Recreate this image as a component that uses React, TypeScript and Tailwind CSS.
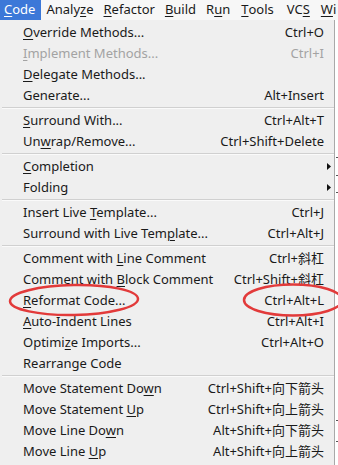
import React from "react";

type Item =
  | { sep: true }
  | {
      sep?: false;
      label: React.ReactNode;
      shortcut?: string;
      disabled?: boolean;
      submenu?: boolean;
    };

// underline a mnemonic letter
const U = ({ children }: { children: React.ReactNode }) => (
  <span className="underline underline-offset-[2px] decoration-[1px]">{children}</span>
);

const items: Item[] = [
  { label: <><U>O</U>verride Methods...</>, shortcut: "Ctrl+O" },
  { label: <><U>I</U>mplement Methods...</>, shortcut: "Ctrl+I", disabled: true },
  { label: <><U>D</U>elegate Methods...</> },
  { label: <>Generate...</>, shortcut: "Alt+Insert" },
  { sep: true },
  { label: <><U>S</U>urround With...</>, shortcut: "Ctrl+Alt+T" },
  { label: <>Un<U>w</U>rap/Remove...</>, shortcut: "Ctrl+Shift+Delete" },
  { sep: true },
  { label: <><U>C</U>ompletion</>, submenu: true },
  { label: <>Folding</>, submenu: true },
  { sep: true },
  { label: <>Insert Live <U>T</U>emplate...</>, shortcut: "Ctrl+J" },
  { label: <>Surround with Live Tem<U>p</U>late...</>, shortcut: "Ctrl+Alt+J" },
  { sep: true },
  { label: <>Comment with <U>L</U>ine Comment</>, shortcut: "Ctrl+斜杠" },
  { label: <>Comment with <U>B</U>lock Comment</>, shortcut: "Ctrl+Shift+斜杠" },
  { label: <><U>R</U>eformat Code...</>, shortcut: "Ctrl+Alt+L" },
  { label: <><U>A</U>uto-Indent Lines</>, shortcut: "Ctrl+Alt+I" },
  { label: <>Optimi<U>z</U>e Imports...</>, shortcut: "Ctrl+Alt+O" },
  { label: <>Rearrange Code</> },
  { sep: true },
  { label: <>Move Statement Do<U>w</U>n</>, shortcut: "Ctrl+Shift+向下箭头" },
  { label: <>Move Statement <U>U</U>p</>, shortcut: "Ctrl+Shift+向上箭头" },
  { label: <>Move Line Do<U>w</U>n</>, shortcut: "Alt+Shift+向下箭头" },
  { label: <>Move Line <U>U</U>p</>, shortcut: "Alt+Shift+向上箭头" },
];

const menus: { key: string; label: React.ReactNode; cls: string }[] = [
  { key: "code", label: <><U>C</U>ode</>, cls: "bg-[#3c78d8] text-white pl-[4px] pr-[6px]" },
  { key: "analyze", label: <>Analy<U>z</U>e</>, cls: "px-[5px]" },
  { key: "refactor", label: <><U>R</U>efactor</>, cls: "px-[5px]" },
  { key: "build", label: <><U>B</U>uild</>, cls: "px-[5px]" },
  { key: "run", label: <>R<U>u</U>n</>, cls: "pl-[5px] pr-[6px]" },
  { key: "tools", label: <><U>T</U>ools</>, cls: "pl-[5px] pr-[8px]" },
  { key: "vcs", label: <>VC<U>S</U></>, cls: "pl-[5px] pr-[6px]" },
  { key: "window", label: <><U>W</U>i</>, cls: "px-[5px]" },
];

export default function App() {
  return (
    <div
      className="relative w-[338px] h-[465px] overflow-hidden bg-white text-[13px] text-[#1a1a1a]"
      style={{ fontFamily: '"Noto Sans", "Noto Sans CJK SC", sans-serif' }}
    >
      {/* Menu bar */}
      <div className="flex h-[20px] items-center bg-[#f7f7f7] whitespace-nowrap">
        {menus.map((m) => (
          <div key={m.key} className={`flex h-full items-center ${m.cls}`}>
            {m.label}
          </div>
        ))}
      </div>

      {/* Dropdown */}
      <div className="w-[335px] h-[445px] bg-[#efefef] border-r border-[#a9a9a9] pt-[2px]">
        {items.map((it, i) =>
          it.sep ? (
            <div key={i} className="h-[4px] pt-[1px]">
              <div className="h-px bg-[#d0d0d0] ml-[2px]" />
              <div className="h-px bg-[#fafafa] ml-[2px]" />
            </div>
          ) : (
            <div
              key={i}
              className={`flex h-[21px] items-center pl-[23px] whitespace-nowrap ${
                it.disabled ? "text-[#a3a3a3]" : ""
              }`}
            >
              <span className="flex-1">{it.label}</span>
              {it.shortcut && <span>{it.shortcut}</span>}
              <span className="w-[10px] flex justify-end pr-[2px]">
                {it.submenu && (
                  <svg width="4" height="7" viewBox="0 0 4 7" className="translate-x-[-1px]">
                    <path d="M0 0 L4 3.5 L0 7 Z" fill="#111" />
                  </svg>
                )}
              </span>
            </div>
          )
        )}
      </div>

      {/* editor behind, peeking on the right */}
      <div className="absolute right-0 top-[20px] w-[3px] h-[445px]">
        <div className="absolute top-[137px] left-[1px] w-[2px] h-px bg-[#555]" />
        <div className="absolute top-[155px] left-[1px] w-[2px] h-px bg-[#555]" />
        <div className="absolute top-[172px] left-[1px] w-[2px] h-px bg-[#555]" />
        <div className="absolute top-[400px] left-[1px] w-[2px] h-px bg-[#555]" />
        <div className="absolute top-[421px] left-[1px] w-[2px] h-px bg-[#555]" />
      </div>

      {/* red annotation ellipses */}
      <svg className="absolute left-0 top-0 pointer-events-none" width="338" height="465">
        <ellipse cx="74" cy="300" rx="64" ry="15" fill="none" stroke="#e23a3a" strokeWidth="2.5" transform="rotate(-1 74 300)" />
        <ellipse cx="293" cy="300" rx="49" ry="15.5" fill="none" stroke="#e23a3a" strokeWidth="2.5" />
      </svg>
    </div>
  );
}
